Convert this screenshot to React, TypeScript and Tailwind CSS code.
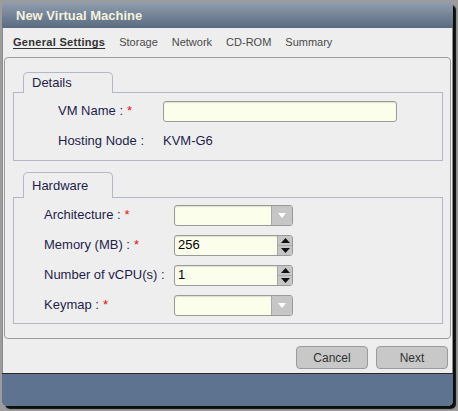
import React from "react";

const font = { fontFamily: '"Liberation Sans", Arial, sans-serif' };

const Req = () => <span className="text-[#e01010] ml-[4px]">*</span>;

const TextBox = ({ width, value }: { width: string; value?: string }) => (
  <div
    className={`${width} h-[21px] rounded-[3px] border border-[#9a9a9a] bg-[#fcfeec] shadow-[inset_0_1px_1px_rgba(0,0,0,0.12)] flex items-center pl-[3px] text-[13px] text-black`}
  >
    {value}
  </div>
);

const Select = () => (
  <div className="w-[119px] h-[21px] rounded-[3px] border border-[#9a9a9a] bg-[#fcfeec] shadow-[inset_0_1px_1px_rgba(0,0,0,0.12)] flex overflow-hidden">
    <div className="flex-1" />
    <div className="w-[21px] h-full bg-[#c6c6c6] border-l border-[#a8a8a8] flex items-center justify-center">
      <svg width="8" height="5" viewBox="0 0 8 5">
        <path d="M0 0h8L4 5z" fill="#ffffff" />
      </svg>
    </div>
  </div>
);

const Spinner = ({ value }: { value: string }) => (
  <div className="w-[119px] h-[21px] rounded-[3px] border border-[#9a9a9a] bg-[#fcfeec] shadow-[inset_0_1px_1px_rgba(0,0,0,0.12)] flex overflow-hidden">
    <div className="flex-1 flex items-center pl-[3px] text-[13px] text-black">{value}</div>
    <div className="w-[15px] h-full bg-[#c6c6c6] border-l border-[#a8a8a8] flex flex-col">
      <div className="flex-1 flex items-center justify-center border-b border-[#a8a8a8]">
        <svg width="9" height="5" viewBox="0 0 9 5">
          <path d="M4.5 0L9 5H0z" fill="#111111" />
        </svg>
      </div>
      <div className="flex-1 flex items-center justify-center">
        <svg width="9" height="5" viewBox="0 0 9 5">
          <path d="M0 0h9L4.5 5z" fill="#111111" />
        </svg>
      </div>
    </div>
  </div>
);

const Legend = ({ label, height }: { label: string; height: string }) => (
  <div className="flex pl-[10px]">
    <div
      className={`w-[90px] ${height} -mb-px relative z-10 rounded-t-[5px] border border-b-0 border-[#b3b7c8] bg-[#eeeeee] flex items-center pl-[8px] text-[13px] text-[#1e1e4c]`}
    >
      {label}
    </div>
  </div>
);

const Row = ({ children }: { children: React.ReactNode }) => (
  <div className="h-[30px] flex items-center">{children}</div>
);

export default function App() {
  return (
    <div className="w-[458px] h-[411px] bg-[#9c9c9c] pl-[2px] pt-[2px] overflow-hidden" style={font}>
      <div className="w-[451px] h-[404px] flex flex-col rounded-[5px] shadow-[3px_3px_1px_#0d0d0d]">
        {/* title bar */}
        <div className="h-[26px] rounded-t-[5px] bg-gradient-to-b from-[#919eae] to-[#5a6b81] flex items-center pl-[14px] pt-[2px] text-[13px] font-bold text-[#f4f3df]">
          New Virtual Machine
        </div>

        {/* body */}
        <div className="h-[345px] bg-[#eeeeee] border-l border-r border-[#8c8c8c] flex flex-col">
          <div className="h-[29px] flex items-center gap-[14px] pl-[10px] text-[11px] text-[#4a4a4a]">
            <span className="font-bold tracking-[0.3px] underline underline-offset-2 text-[#333333]">General Settings</span>
            <span>Storage</span>
            <span>Network</span>
            <span>CD-ROM</span>
            <span>Summary</span>
          </div>

          <div className="ml-[1px] w-[447px] h-[282px] rounded-[4px] border border-[#9c9c9c] pt-[14px] px-[8px]">
            <Legend label="Details" height="h-[21px]" />
            <div className="w-[430px] border border-[#b3b7c8] pt-[3px] pb-[4px] pl-[44px]">
              <Row>
                <div className="w-[105px] text-[13px] text-[#1e1e4c]">
                  VM Name :<Req />
                </div>
                <TextBox width="w-[234px]" />
              </Row>
              <Row>
                <div className="w-[105px] text-[13px] text-[#1e1e4c]">Hosting Node :</div>
                <div className="text-[13px] text-[#1e1e4c]">KVM-G6</div>
              </Row>
            </div>

            <div className="h-[11px]" />
            <Legend label="Hardware" height="h-[26px]" />
            <div className="w-[430px] border border-[#b3b7c8] pt-[2px] pb-[3px] pl-[30px]">
              <Row>
                <div className="w-[130px] text-[13px] text-[#1e1e4c]">
                  Architecture :<Req />
                </div>
                <Select />
              </Row>
              <Row>
                <div className="w-[130px] text-[13px] text-[#1e1e4c]">
                  Memory (MB) :<Req />
                </div>
                <Spinner value="256" />
              </Row>
              <Row>
                <div className="w-[130px] text-[13px] text-[#1e1e4c]">Number of vCPU(s) :</div>
                <Spinner value="1" />
              </Row>
              <Row>
                <div className="w-[130px] text-[13px] text-[#1e1e4c]">
                  Keymap :<Req />
                </div>
                <Select />
              </Row>
            </div>
          </div>

          <div className="flex justify-end gap-[8px] pr-[4px] pt-[7px]">
            <button className="w-[72px] h-[23px] rounded-[4px] border border-[#9a9a9a] bg-[#c8c8c8] text-[12px] text-[#333333]">
              Cancel
            </button>
            <button className="w-[72px] h-[23px] rounded-[4px] border border-[#9a9a9a] bg-[#c8c8c8] text-[12px] text-[#333333]">
              Next
            </button>
          </div>
        </div>

        {/* footer */}
        <div className="flex-1 border-t border-[#2a2a2a] bg-[#5e7390] rounded-b-[5px]" />
      </div>
    </div>
  );
}
